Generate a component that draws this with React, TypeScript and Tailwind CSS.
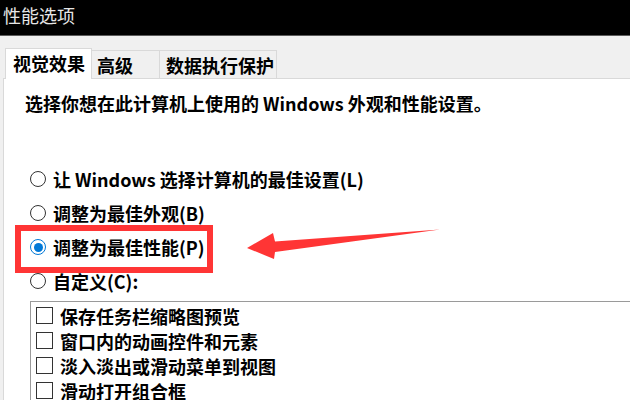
import React from "react";

const tabs = [
  { label: "视觉效果", active: true },
  { label: "高级", active: false },
  { label: "数据执行保护", active: false },
];

const radios = [
  { label: "让 Windows 选择计算机的最佳设置(L)", checked: false },
  { label: "调整为最佳外观(B)", checked: false },
  { label: "调整为最佳性能(P)", checked: true },
  { label: "自定义(C):", checked: false },
];

const effects = [
  "保存任务栏缩略图预览",
  "窗口内的动画控件和元素",
  "淡入淡出或滑动菜单到视图",
  "滑动打开组合框",
];

const Radio: React.FC<{ checked: boolean }> = ({ checked }) => (
  <span
    className={`flex items-center justify-center w-[16px] h-[16px] rounded-full border bg-white shrink-0 ${
      checked ? "border-[#0078d7]" : "border-[#333333]"
    }`}
  >
    {checked && <span className="w-[9px] h-[9px] rounded-full bg-[#0078d7]" />}
  </span>
);

const App: React.FC = () => {
  return (
    <div className="relative w-[630px] h-[400px] overflow-hidden bg-[#f0f0f0] text-black font-['Noto_Sans_CJK_SC',sans-serif]">
      {/* title bar */}
      <div className="h-[36px] bg-black border-b border-[#5b5b5b] pl-[3px] text-[18px] leading-[30px] text-[#e6e6e6]">
        性能选项
      </div>

      {/* tabs */}
      <div className="flex items-end h-[42px] pl-[5px]">
        {tabs.map((t) =>
          t.active ? (
            <div
              key={t.label}
              className="relative z-10 -mb-px w-[87px] h-[31px] pl-[7px] bg-white border border-b-0 border-[#d9d9d9] text-[18px] leading-[29px] font-bold"
            >
              {t.label}
            </div>
          ) : (
            <div
              key={t.label}
              className={`h-[28px] pl-[5px] border border-l-0 border-b-0 border-[#d9d9d9] text-[18px] leading-[28px] font-bold ${
                t.label === "高级" ? "w-[68px]" : "w-[117px] pl-[6px]"
              }`}
            >
              {t.label}
            </div>
          )
        )}
      </div>

      {/* panel */}
      <div className="ml-[3px] h-[400px] bg-white border-l border-t border-[#d9d9d9] text-[18px] font-bold">
        <p className="mt-[12px] pl-[21px] leading-[24px]">
          选择你想在此计算机上使用的 Windows 外观和性能设置。
        </p>

        <div className="mt-[47px] pl-[26px]">
          {radios.map((r) => (
            <div key={r.label} className="flex items-center gap-[7px] h-[34px]">
              <Radio checked={r.checked} />
              <span className="leading-[24px]">{r.label}</span>
            </div>
          ))}
        </div>

        {/* list box */}
        <div className="mt-[3px] ml-[26px] border-l border-t border-[#9a9a9a] pt-[1px]">
          {effects.map((e) => (
            <div key={e} className="flex items-center gap-[7px] h-[25px] pl-[5px]">
              <span className="w-[17px] h-[17px] border border-[#333333] bg-white shrink-0" />
              <span className="leading-[24px]">{e}</span>
            </div>
          ))}
        </div>
      </div>

      {/* annotation */}
      <div className="absolute left-[15px] top-[225px] w-[198px] h-[48px] border-[6px] border-[#ff3535]" />
      <svg className="absolute left-0 top-0" width="630" height="400" viewBox="0 0 630 400">
        <polygon
          points="247,248 273,233 275,241.5 440,229.5 275,252 274,259"
          fill="#ff3535"
        />
      </svg>
    </div>
  );
};

export default App;
